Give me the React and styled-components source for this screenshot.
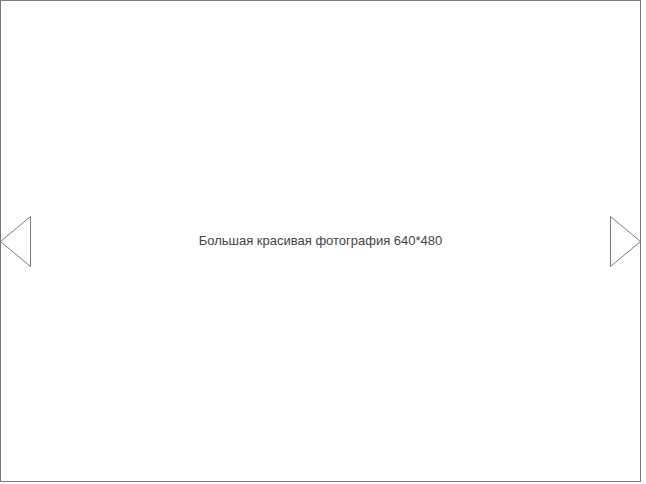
import React from "react";
import styled, { createGlobalStyle } from "styled-components";

const GlobalStyle = createGlobalStyle`
  html, body {
    margin: 0;
    padding: 0;
    background: #fff;
  }
`;

const Slider = styled.div`
  position: relative;
  box-sizing: border-box;
  width: 641px;
  height: 482px;
  border: 1px solid #7a7a7a;
  display: flex;
  align-items: center;
  justify-content: center;
`;

const Caption = styled.span`
  font-family: "Liberation Sans", Arial, sans-serif;
  font-size: 13px;
  color: #444;
  margin-bottom: 2px;
`;

const Arrow = styled.svg`
  position: absolute;
  top: 215px;
  ${props => (props.side === "left" ? "left: -1px;" : "right: -1px;")}
  width: 31px;
  height: 51px;
  overflow: visible;
`;

const ArrowLeft = () => (
  <Arrow side="left" viewBox="0 0 31 51">
    <polygon points="30.5,0.5 0.5,25.5 30.5,50.5" fill="#fff" stroke="#7a7a7a" strokeWidth="1" />
  </Arrow>
);

const ArrowRight = () => (
  <Arrow side="right" viewBox="0 0 31 51">
    <polygon points="0.5,0.5 30.5,25.5 0.5,50.5" fill="#fff" stroke="#7a7a7a" strokeWidth="1" />
  </Arrow>
);

export default function App() {
  return (
    <>
      <GlobalStyle />
      <Slider>
        <ArrowLeft />
        <Caption>Большая красивая фотография 640*480</Caption>
        <ArrowRight />
      </Slider>
    </>
  );
}
